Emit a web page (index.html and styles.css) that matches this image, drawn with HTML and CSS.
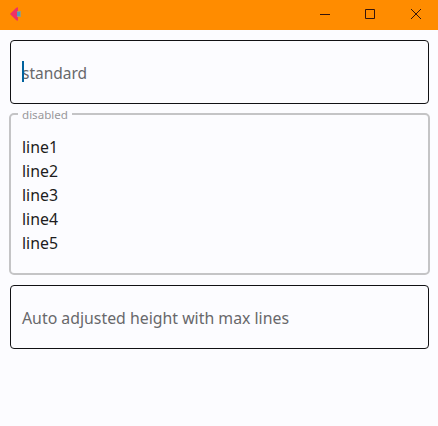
FILE: index.html
```html
<!DOCTYPE html>
<html lang="en">
<head>
<meta charset="utf-8">
<title>Text fields</title>
<link rel="stylesheet" href="styles.css">
</head>
<body>
<header class="titlebar">
  <svg class="logo" width="14" height="16" viewBox="0 0 14 16"><path d="M0 8 6 2Q8 .5 8 2v12q0 1.5-2 0Z" fill="#ee3167"/><path d="M7 5h4v6H7Z" fill="#a59a70"/><path d="M7 6h3v4H7Z" fill="#4f9dbd"/></svg>
  <div class="controls">
    <svg width="12" height="12" viewBox="0 0 12 12"><path d="M1 6.5h10"/></svg>
    <svg width="12" height="12" viewBox="0 0 12 12"><path d="M1.5 1.5h9v9h-9Z"/></svg>
    <svg width="12" height="12" viewBox="0 0 12 12"><path d="m1 1 10 10M11 1 1 11"/></svg>
  </div>
</header>
<main class="fields">
  <div class="field focused"><span class="cursor"></span><span class="hint hint-standard">standard</span></div>
  <fieldset class="field disabled">
    <legend>disabled</legend>
    <div class="lines"><div>line1</div><div>line2</div><div>line3</div><div>line4</div><div>line5</div></div>
  </fieldset>
  <div class="field"><span class="hint">Auto adjusted height with max lines</span></div>
</main>
</body>
</html>
```
FILE: styles.css
```css
* { box-sizing: border-box; }
body {
  margin: 0;
  height: 426px;
  overflow: hidden;
  background: #fcfcff;
  font: 15.85px/24px "Noto Sans", "Open Sans", sans-serif;
}
.titlebar {
  height: 30px;
  background: #ff8c00;
  display: flex;
  align-items: center;
  justify-content: space-between;
  padding: 0 16px 2px 10px;
}
.logo { display: block; }
.controls { display: flex; gap: 34px; }
.controls svg { display: block; fill: none; stroke: #35150c; stroke-width: 1; }
.controls svg:first-child { margin-right: -1px; }
.fields {
  display: flex;
  flex-direction: column;
  gap: 10px;
  padding: 10px 9px 0 10px;
}
.field {
  position: relative;
  height: 64px;
  margin: 0;
  padding: 2px 11px 0;
  border: 1px solid #111114;
  border-radius: 4px;
  display: flex;
  align-items: center;
}
.hint { color: #68686b; white-space: nowrap; }
.hint-standard { font-size: 15.5px; }
.cursor {
  position: absolute;
  left: 11px;
  top: 20px;
  width: 2px;
  height: 21px;
  background: #00629e;
}
.disabled {
  display: block;
  height: 168px;
  margin: -7px -1px 0;
  padding: 0 11px;
  border-color: #c4c4c6;
  border-width: 2px;
  border-radius: 5px;
  color: #1c1c20;
}
.disabled legend {
  margin-left: -4px;
  padding: 1px 4px 0;
  font-size: 11.6px;
  line-height: 13px;
  color: #98989b;
}
.lines { padding-top: 14px; }
```
